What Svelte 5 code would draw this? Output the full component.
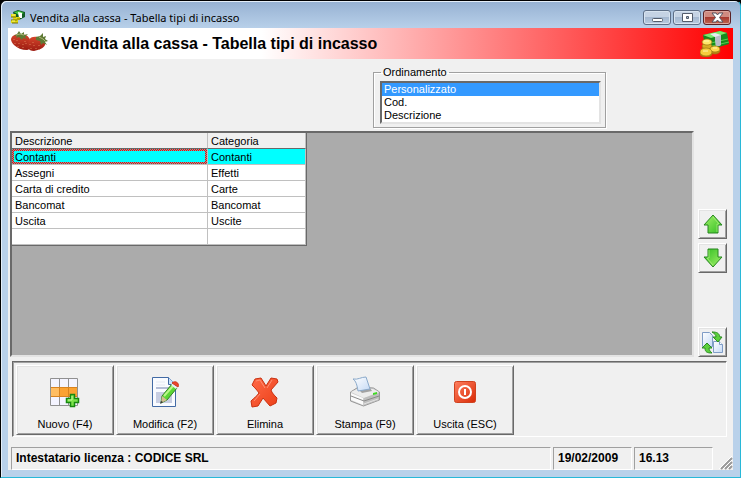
<script lang="ts">
	const orders = ['Personalizzato', 'Cod.', 'Descrizione'];

	const rows = [
		{ descrizione: 'Contanti', categoria: 'Contanti' },
		{ descrizione: 'Assegni', categoria: 'Effetti' },
		{ descrizione: 'Carta di credito', categoria: 'Carte' },
		{ descrizione: 'Bancomat', categoria: 'Bancomat' },
		{ descrizione: 'Uscita', categoria: 'Uscite' },
		{ descrizione: '', categoria: '' }
	];

	let order = $state('Personalizzato');
	let selected = $state(0);
</script>

{#snippet money()}
	<path d="M3 5 20 1l7 2 2 11-17 5-7-4z" fill="#168a1d" />
	<path d="m3 5 17-4 7 2-16 5z" fill="#7ae86c" />
	<path d="m5 10 6 3 17-4M6 13l6 3 17-4" fill="none" stroke="#55cf4d" />
	<path d="m10 4 5-1 6 2v10l-5 2-1-10z" fill="#e9e9f2" />
	<path d="m15 7 6-2v10l-5 2z" fill="#b9bbc8" />
	<g stroke="#9a7410" stroke-width=".7">
		<ellipse cx="7" cy="19" rx="5" ry="3" fill="#b98a15" />
		<ellipse cx="7" cy="16" rx="5" ry="3" fill="#d9ad25" />
		<ellipse cx="7" cy="12" rx="5" ry="3" fill="#ffe568" />
		<ellipse cx="15" cy="21" rx="5" ry="3" fill="#b98a15" />
		<ellipse cx="15" cy="19" rx="5" ry="3" fill="#ffd94d" />
		<ellipse cx="6" cy="24" rx="6" ry="3" fill="#b98a15" />
		<ellipse cx="6" cy="22" rx="6" ry="4" fill="#f6cc3c" />
	</g>
	<path d="M4 11h5M3 21h5M13 18h4" stroke="#fff7b0" />
{/snippet}

{#snippet arrow()}
	<path
		d="M10 1 19 11h-4v8H5v-8H1z"
		fill="url(#green)"
		stroke="#26861f"
		stroke-linejoin="round"
	/>
	<path d="m10 3 6 7h-2v8" fill="none" stroke="#b5f383" opacity=".7" />
{/snippet}

<div class="window">
	<svg class="defs" width="0" height="0" aria-hidden="true">
		<defs>
			<linearGradient id="green" x2="1" y2="1">
				<stop offset="0" stop-color="#a5f26a" />
				<stop offset="1" stop-color="#2fbd22" />
			</linearGradient>
			<linearGradient id="red" x2="1" y2="1">
				<stop offset="0" stop-color="#ff8061" />
				<stop offset="1" stop-color="#d92a05" />
			</linearGradient>
			<linearGradient id="cross" x2="1" y2="1">
				<stop offset="0" stop-color="#ff6a48" />
				<stop offset="1" stop-color="#ec4018" />
			</linearGradient>
			<linearGradient id="berry" x2="0" y2="1">
				<stop offset="0" stop-color="#d6452c" />
				<stop offset="1" stop-color="#9c1c12" />
			</linearGradient>
			<linearGradient id="paper" x2="1" y2="1">
				<stop offset="0" stop-color="#fff" />
				<stop offset="1" stop-color="#c5daf5" />
			</linearGradient>
		</defs>
	</svg>

	<header class="titlebar">
		<svg width="16" height="16" viewBox="0 0 16 16" aria-hidden="true">
			<path d="M3 3 8 1l7 2v5L9 11 4 7z" fill="#125c25" />
			<path d="m4 3 5-1 5 2-5 2z" fill="#48cf45" />
			<path d="m8 3 4 1v5L9 9z" fill="#fff" />
			<path d="M1 5h5v3h4v3H8v3H1v-3h2V8H1z" fill="#ded812" />
			<path d="M1 8h5M1 11h6M2 14h6M7 10h3" stroke="#777108" />
			<path d="M2 6h3M2 12h3" stroke="#fffb73" />
		</svg>
		<span class="caption">Vendita alla cassa - Tabella tipi di incasso</span>
		<div class="controls">
			<button aria-label="Riduci a icona">
				<svg width="13" height="12" viewBox="0 0 13 12">
					<rect x="1.5" y="6.5" width="10" height="3" rx="1" fill="#fff" stroke="#535c6b" />
				</svg>
			</button>
			<button aria-label="Ingrandisci">
				<svg width="13" height="12" viewBox="0 0 13 12">
					<path
						d="M1.5 1.5h10v8h-10zM5.5 4.500v2h2v-2z"
						fill="#fff"
						fill-rule="evenodd"
						stroke="#535c6b"
					/>
				</svg>
			</button>
			<button class="close" aria-label="Chiudi">
				<svg width="13" height="12" viewBox="0 0 13 12">
					<path
						d="M1 1h4l1.5 2L8 1h4L8.500 5.500 12 10H8L6.500 8 5 10H1l3.500-4.500z"
						fill="#fff"
						stroke="#555461"
					/>
				</svg>
			</button>
		</div>
	</header>

	<main>
		<div class="banner">
			<svg width="38" height="22" viewBox="0 0 38 22" aria-hidden="true">
				<path
					d="M0 8c1-4 5-5 9-5 5 0 9 2 10 6 1 5 0 10-3 10-5 0-10-2-13-5C1 12 0 10 0 8z"
					fill="url(#berry)"
				/>
				<path
					d="M18 9c1-3 5-4 9-3 5 1 8 4 7 8-1 3-6 5-11 6-3 0-5-1-6-3-1-3 0-6 1-8z"
					fill="url(#berry)"
				/>
				<path d="m3 5 3-2 2-3 2 3 3-2v3l4-1-3 3 2 2-4-1-1 2-3-3-3 1 1-2z" fill="#5f7a35" />
				<path d="m25 6 4-1 3-3v4l3-1-1 3 3 2-3 1 2 3-4-2-2 2-1-4-4-1z" fill="#5f7a35" />
				<path d="m5 4 4-1 4 1M28 6l4 2 3 3" fill="none" stroke="#a9b87a" />
				<path
					d="M3 8v1m3 0v1m-2 2v1m4-1v1m-1 2v1m5-3v1m0 2v1m3-5v1m-1-3v1m5 2v1m3-3v1m1 2v1m-3 2v1m5-1v1m3-4v1m0 3v1"
					stroke="#dc7a52"
				/>
			</svg>
			<h1>Vendita alla cassa - Tabella tipi di incasso</h1>
			<svg width="30" height="27" viewBox="0 0 30 27" aria-hidden="true">{@render money()}</svg>
		</div>

		<div class="sorting">
			<fieldset>
				<legend><label for="order">Ordinamento</label></legend>
				<select id="order" size="3" bind:value={order}>
					{#each orders as item}
						<option value={item}>{item}</option>
					{/each}
				</select>
			</fieldset>
		</div>

		<div class="content">
			<div class="grid">
				<table>
					<thead>
						<tr>
							<th class="wide">Descrizione</th>
							<th class="narrow">Categoria</th>
						</tr>
					</thead>
					<tbody>
						{#each rows as row, i}
							<tr class:selected={i === selected} onclick={() => (selected = i)}>
								<td><span>{row.descrizione}</span></td>
								<td>{row.categoria}</td>
							</tr>
						{/each}
					</tbody>
				</table>
			</div>
			<div class="side">
				<button aria-label="Sposta su">
					<svg width="20" height="20" viewBox="0 0 20 20">{@render arrow()}</svg>
				</button>
				<button aria-label="Sposta giù">
					<svg class="down" width="20" height="20" viewBox="0 0 20 20">{@render arrow()}</svg>
				</button>
				<button class="refresh" aria-label="Aggiorna">
					<svg width="23" height="23" viewBox="0 0 23 23">
						<path d="M1.5 1.5h7l3 3v11h-10z" fill="url(#paper)" stroke="#7f9cc6" />
						<path d="M12.5 10.500h6l3 3v8h-9z" fill="url(#paper)" stroke="#7f9cc6" />
						<path d="M18.500 10.500v3h3" fill="#fff" stroke="#7f9cc6" />
						<path d="M11 1c5 0 7 1 8 5h2l-4 5-5-5h3c0-2-1-3-4-5z" fill="#5bd03c" stroke="#2b8c22" />
						<path d="M11 22c-5 0-7-1-7-5H1l5-5 5 5H8c0 2 1 3 3 5z" fill="#5bd03c" stroke="#2b8c22" />
					</svg>
				</button>
			</div>
		</div>

		<div class="toolbar">
			<button>
				<svg width="32" height="32" viewBox="0 0 32 32">
					<rect x="1.5" y="2.5" width="27" height="27" fill="#f4f4ff" />
					<path d="M2 11h26v9H2z" fill="#fba232" />
					<path d="M2 11h9v9H2z" fill="#ffbd62" />
					<path
						d="M1.5 2.5h27v27h-27zM10.500 2v28M19.500 2v28M1 11.500h28M1 20.500h28"
						fill="none"
						stroke="#909090"
					/>
					<path d="M2 11.500h26M2 20.500h26M10.500 12v8M19.500 12v8" stroke="#d88320" />
					<path
						d="M21.500 18.500h4v4h4v4h-4v4h-4v-4h-4v-4h4z"
						fill="#7ce34b"
						stroke="#16880f"
						stroke-width="1.5"
					/>
					<path d="M23 20v4h-4" fill="none" stroke="#c6fa98" />
				</svg>
				<span>Nuovo (F4)</span>
			</button>
			<button>
				<svg width="32" height="32" viewBox="0 0 32 32">
					<path d="M3.500 1.500h16l7 7v22h-23z" fill="#f9fbff" stroke="#426aa5" />
					<path d="M19.500 1.500v7h7" fill="#c9e0fa" stroke="#426aa5" />
					<path d="M7 6h9M7 9h9" stroke="#e4e9f3" />
					<path d="M7 12h16" stroke="#b4bdd6" stroke-width="2" />
					<path d="M7 16h16v11H7z" fill="#c8cee2" />
					<path d="m13 20 10-12 5 4-10 12-6 3z" fill="#5cd636" stroke="#328123" />
					<path d="m15 20 9-10" stroke="#b9f889" stroke-width="2" />
					<path d="m13 20 5 4-6 3z" fill="#d5bd92" />
					<path d="m12 25 2 1-3 2z" fill="#333" />
					<path d="m22 9 5 4 2-3-4-4z" fill="#e9edf4" />
					<path d="M23 7c3-3 8 0 6 4z" fill="#ee452c" stroke="#c7391f" />
				</svg>
				<span>Modifica (F2)</span>
			</button>
			<button>
				<svg width="32" height="32" viewBox="0 0 32 32">
					<path
						d="M6 3l6-1 5 8 5-8 6 1 1 3-7 8c1 3 3 5 6 8l-1 5-6 3-7-8-5 8-6 1-1-6c3-3 6-5 8-8-2-3-4-5-7-8z"
						fill="url(#cross)"
						stroke="#c9300f"
						stroke-linejoin="round"
					/>
					<path d="m7 5 4-1 5 8M23 4l-5 8M5 25l6-7" fill="none" stroke="#ff9073" />
				</svg>
				<span>Elimina</span>
			</button>
			<button>
				<svg width="32" height="32" viewBox="0 0 32 32">
					<path
						d="m1.5 16 8-5 15 1 6 4v8l-16 6-13-5z"
						fill="#ccc"
						stroke="#999"
						stroke-linejoin="round"
					/>
					<path d="m2 16 8-4 14 1 6 3-15 6z" fill="#ececec" />
					<path d="M2 17v7l12 5v-7z" fill="#fafafa" />
					<path d="m15 22 15-5v7l-15 5z" fill="#bdbdbd" />
					<path d="m9 13 12-1 2 3-10 2z" fill="#a2a2a2" />
					<path
						d="M4 3c5 1 8-2 13-2l4 12-12 2C8 9 7 5 4 3z"
						fill="url(#paper)"
						stroke="#8aa9ca"
					/>
					<path d="m2 20 13 5 15-5" fill="none" stroke="#8a8a8a" />
					<path d="m15 28 14-5" stroke="#e4e4e4" />
					<path d="m24 17 4-1v2l-4 1z" fill="#3fda24" />
				</svg>
				<span>Stampa (F9)</span>
			</button>
			<button>
				<svg width="32" height="32" viewBox="0 0 32 32">
					<rect x="5.5" y="5.5" width="21" height="21" rx="2" fill="url(#red)" stroke="#cf421f" />
					<circle cx="16" cy="16" r="6" fill="none" stroke="#fff" stroke-width="2" />
					<path d="M16 13v6" stroke="#fff" stroke-width="2" />
				</svg>
				<span>Uscita (ESC)</span>
			</button>
		</div>

		<footer>
			<div class="license">Intestatario licenza : CODICE SRL</div>
			<div class="pane">19/02/2009</div>
			<div class="pane">16.13</div>
			<svg width="14" height="14" viewBox="0 0 14 14" aria-hidden="true">
				<path d="m2 13 11-11M6 13l7-7M10 13l3-3" stroke="#999" stroke-width="2" />
				<path d="m0 13 13-13M4 13l9-9M8 13l5-5" stroke="#fff" />
			</svg>
		</footer>
	</main>
</div>

<style>
	:global(body) {
		margin: 0;
		background: #000;
	}

	.window {
		box-sizing: border-box;
		min-height: 100vh;
		display: flex;
		flex-direction: column;
		padding: 0 7px 7px;
		border: 1px solid #000;
		border-right-color: #28b8d8;
		border-bottom-color: #28b8d8;
		border-radius: 6px 6px 0 0;
		background: linear-gradient(#96b1d2, #b9d1ea 28px);
		box-shadow: inset 1px 1px #e4eef8;
		font-family: 'Liberation Sans', Arial, sans-serif;
		font-size: 11px;
		line-height: 13px;
		color: #000;
	}

	.defs {
		position: absolute;
	}

	button {
		font: inherit;
		color: inherit;
		padding: 0;
		cursor: pointer;
	}

	.titlebar {
		display: flex;
		align-items: center;
		gap: 4px;
		height: 27px;
		padding-left: 2px;
	}

	.titlebar > svg {
		margin-top: 4px;
	}

	.caption {
		flex: 1;
		padding-top: 6px;
		font-family: 'Noto Sans', 'Open Sans', sans-serif;
		font-size: 11px;
		line-height: 16px;
		white-space: nowrap;
	}

	.controls {
		display: flex;
		gap: 2px;
		padding: 6px 2px 0 0;
	}

	.controls button {
		display: flex;
		align-items: center;
		justify-content: center;
		width: 28px;
		height: 15px;
		border: 1px solid #5e6f87;
		border-radius: 3px;
		background: linear-gradient(#c5d3e4 50%, #a5b9d1 50%, #b8cbe0);
		box-shadow: inset 0 0 0 1px #d8e4f0;
	}

	.controls .close {
		border-color: #5b2226;
		background: linear-gradient(#d08a80 50%, #a83a30 50%, #bf6450);
		box-shadow: inset 0 0 0 1px #dba69d;
	}

	main {
		flex: 1;
		display: flex;
		flex-direction: column;
		background: #f0f0f0;
	}

	.banner {
		display: flex;
		align-items: center;
		height: 31px;
		padding: 0 3px;
		background: linear-gradient(90deg, #fff 35%, #f00);
	}

	.banner svg:first-child {
		align-self: flex-start;
		margin-top: 3px;
	}

	h1 {
		flex: 1;
		margin: 0 0 0 12px;
		font-size: 16px;
		line-height: 20px;
		white-space: nowrap;
	}

	.sorting {
		display: flex;
		justify-content: center;
		padding: 7px 0 3px 238px;
	}

	fieldset {
		box-sizing: border-box;
		width: 233px;
		margin: 0;
		padding: 2px 4px 3px 6px;
		border: 1px solid #a0a0a0;
		box-shadow: 1px 1px #fff, inset 1px 1px #fff;
	}

	legend {
		margin-left: 1px;
		padding: 0 2px;
	}

	select {
		display: block;
		width: 100%;
		height: 43px;
		padding: 0;
		appearance: none;
		border: 2px solid;
		border-color: #696969 #e3e3e3 #e3e3e3 #696969;
		border-radius: 0;
		background: #fff;
		font: inherit;
		color: #000;
		overflow: hidden;
		outline: none;
	}

	option {
		min-height: 13px;
		padding: 0 2px;
		line-height: 13px;
	}

	option:checked {
		background: #39f linear-gradient(#39f, #39f);
		color: #fff;
	}

	.content {
		flex: 1;
		display: flex;
		gap: 4px;
		padding: 0 6px 0 2px;
	}

	.grid {
		flex: 1;
		border: 2px solid;
		border-color: #696969 #e3e3e3 #e3e3e3 #696969;
		background: #ababab;
	}

	table {
		border-collapse: separate;
		border-spacing: 0;
		border-right: 1px solid #696969;
		border-bottom: 1px solid #696969;
		background: #fff;
		table-layout: fixed;
	}

	th,
	td {
		box-sizing: border-box;
		height: 16px;
		padding: 2px 3px 0;
		border-right: 1px solid #c0c0c0;
		border-bottom: 1px solid #c0c0c0;
		text-align: left;
		font-weight: normal;
	}

	th {
		background: #f0f0f0;
		border-bottom-color: #696969;
	}

	td:first-child {
		padding: 0;
	}

	td span {
		display: block;
		box-sizing: border-box;
		height: 15px;
		padding: 2px 3px 0;
	}

	.wide {
		width: 196px;
	}

	.narrow {
		width: 98px;
	}

	.selected td {
		background: #0ff;
	}

	.selected span {
		padding: 0 1px;
		border: 2px solid transparent;
		background:
			linear-gradient(#0ff, #0ff) padding-box,
			repeating-conic-gradient(#f00 0 25%, #7aa 0 50%) 0 0 / 2px 2px border-box;
	}

	.side {
		display: flex;
		flex-direction: column;
		gap: 4px;
		padding-top: 78px;
	}

	.side button,
	.toolbar button {
		background: #f0f0f0;
		border: 1px solid;
		border-color: #fff #696969 #696969 #fff;
		box-shadow: inset 1px 1px #e3e3e3, inset -1px -1px #a0a0a0;
	}

	.side button {
		display: flex;
		align-items: center;
		justify-content: center;
		width: 29px;
		height: 30px;
	}

	.down {
		transform: rotate(180deg);
	}

	.side .refresh {
		margin-top: auto;
	}

	.toolbar {
		display: flex;
		gap: 2px;
		margin: 4px 6px 0 4px;
		padding: 3px 3px 1px;
		border: 1px solid;
		border-color: #696969 #fff #fff #696969;
		box-shadow: inset 1px 1px #a0a0a0;
	}

	.toolbar button {
		display: flex;
		flex-direction: column;
		align-items: center;
		width: 98px;
		height: 70px;
		padding: 10px 0 0;
		gap: 10px;
	}

	footer {
		display: flex;
		gap: 2px;
		margin-top: 10px;
		padding-left: 3px;
		font-size: 12px;
		font-weight: bold;
		line-height: 21px;
	}

	footer div {
		padding: 0 4px;
		border: 1px solid;
		border-color: #a0a0a0 #fff #fff #a0a0a0;
		white-space: nowrap;
	}

	.license {
		flex: 1;
	}

	.pane {
		width: 69px;
	}

	footer svg {
		align-self: flex-end;
		margin-left: 4px;
	}
</style>
